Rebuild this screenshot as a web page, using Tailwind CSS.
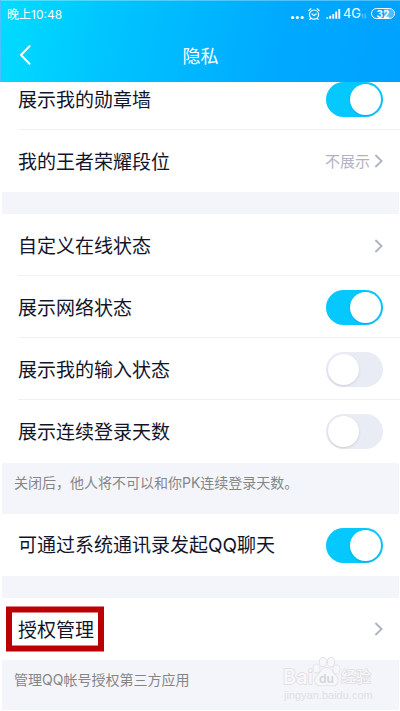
<!DOCTYPE html>
<html lang="zh-CN">
<head>
  <meta charset="UTF-8" />
  <meta name="viewport" content="width=device-width, initial-scale=1.0"/>
  <title>隐私</title>
  <script src="https://cdn.jsdelivr.net/npm/@tailwindcss/browser@4"></script>
</head>
<body class="bg-white font-['Noto_Sans_CJK_SC',sans-serif] text-[#11152b]">

  <!-- Header -->
  <header class="relative z-10 h-[82px] border-t border-l border-white/30 bg-linear-[100deg,#00dcff_0%,#00c4ff_28%,#00a9ff_70%,#00a2ff_100%] text-white">
    <div class="flex h-[26px] items-center justify-between pl-1.5 pr-[5px] text-xs">
      <p>晚上<span class="font-['Inter']">10:48</span></p>
      <div class="flex items-center gap-1 font-['Inter']">
        <svg class="h-3 w-[13px]" viewBox="0 0 13 12" fill="currentColor">
          <circle cx="1.6" cy="9.5" r="1.6"/><circle cx="6.4" cy="9.5" r="1.6"/><circle cx="11.2" cy="9.5" r="1.6"/>
        </svg>
        <svg class="h-3 w-3" viewBox="0 0 12 12" fill="none" stroke="currentColor" stroke-width="1.2" stroke-linecap="round">
          <circle cx="6" cy="6.6" r="4.6"/>
          <path d="M.8 2.6 2.9.8M11.2 2.6 9.1.8M4 6l2 1.6L8.2 6M2.7 10.4l-.8 1M9.3 10.4l.8 1"/>
        </svg>
        <svg class="ml-0.5 h-3 w-[15px]" viewBox="0 0 15 12" fill="currentColor">
          <path d="M.3 9.200h1.900v1.600H.3zM3.300 7.800h1.900v3H3.300zM6.300 5.900h1.900v4.900H6.300zM9.300 3.600h1.900v7.200H9.300zM12.300 1h1.900v9.800h-1.900z"/>
        </svg>
        <span class="-ml-0.5 text-[13px]">4G</span>
        <svg class="-ml-1 mt-1 h-1.5 w-1.5 opacity-50" viewBox="0 0 6 6" fill="none" stroke="currentColor" stroke-width=".8">
          <path d="M1.8 5.5V1L.6 2.3M4.2.6v4.6l1.2-1.4"/>
        </svg>
        <span class="relative flex h-[11px] w-6 items-center justify-center overflow-hidden rounded-full border border-white text-[10px] font-bold leading-none">
          <span class="absolute inset-y-0 right-0 w-2.5 bg-white/30"></span>
          <span class="relative">32</span>
        </span>
      </div>
    </div>
    <div class="flex h-[55px] items-center px-3">
      <button type="button" aria-label="返回" class="flex h-8 w-6 items-center justify-center">
        <svg class="h-5 w-3" viewBox="0 0 12 20" fill="none" stroke="currentColor" stroke-width="2" stroke-linecap="round" stroke-linejoin="round"><path d="M10.5 1.3 2 10l8.5 8.7"/></svg>
      </button>
      <h1 class="flex-1 pr-6 text-center text-lg">隐私</h1>
    </div>
  </header>

  <!-- Settings, first row scrolled partly under the header -->
  <main class="-mt-3.5 text-[19px]">
    <section class="pl-[18px]">
      <label class="flex h-[62px] items-center justify-between border-b border-[#f0f1f6] pr-[17px] pt-0.5">
        展示我的勋章墙
        <input type="checkbox" checked class="relative h-[35px] w-[57px] appearance-none rounded-full bg-[#e9ebf5] before:absolute before:top-0.5 before:left-0.5 before:size-[31px] before:rounded-full before:bg-white before:shadow-sm checked:bg-[#05c8ff] checked:before:left-6">
      </label>
      <button type="button" class="flex h-[62px] w-full items-center justify-between pr-[17px]">
        我的王者荣耀段位
        <span class="flex items-center gap-1 text-[15px] text-[#b0b3c2]">不展示
          <svg class="h-3.5 w-[9px]" viewBox="0 0 9 14" fill="none" stroke="#aeb2c1" stroke-width="1.8"><path d="M1.4 1 7.6 7l-6.2 6"/></svg>
        </span>
      </button>
    </section>

    <div class="ml-0.5 mr-px h-[22px] bg-[#f4f5fa]"></div>

    <section class="pl-[18px]">
      <button type="button" class="flex h-[62px] w-full items-center justify-between border-b border-[#f0f1f6] pr-[17px] pt-0.5">
        自定义在线状态
        <svg class="h-3.5 w-[9px]" viewBox="0 0 9 14" fill="none" stroke="#aeb2c1" stroke-width="1.8"><path d="M1.4 1 7.6 7l-6.2 6"/></svg>
      </button>
      <label class="flex h-[62px] items-center justify-between border-b border-[#f0f1f6] pr-[17px] pt-0.5">
        展示网络状态
        <input type="checkbox" checked class="relative h-[35px] w-[57px] appearance-none rounded-full bg-[#e9ebf5] before:absolute before:top-0.5 before:left-0.5 before:size-[31px] before:rounded-full before:bg-white before:shadow-sm checked:bg-[#05c8ff] checked:before:left-6">
      </label>
      <label class="flex h-[62px] items-center justify-between border-b border-[#f0f1f6] pr-[17px] pt-0.5">
        展示我的输入状态
        <input type="checkbox" class="relative h-[35px] w-[57px] appearance-none rounded-full bg-[#e9ebf5] before:absolute before:top-0.5 before:left-0.5 before:size-[31px] before:rounded-full before:bg-white before:shadow-sm checked:bg-[#05c8ff] checked:before:left-6">
      </label>
      <label class="flex h-[63px] items-center justify-between pr-[17px]">
        展示连续登录天数
        <input type="checkbox" class="relative h-[35px] w-[57px] appearance-none rounded-full bg-[#e9ebf5] before:absolute before:top-0.5 before:left-0.5 before:size-[31px] before:rounded-full before:bg-white before:shadow-sm checked:bg-[#05c8ff] checked:before:left-6">
      </label>
    </section>

    <p class="ml-0.5 mr-px h-[51px] bg-[#f4f5fa] pt-[7px] pl-3 text-sm leading-6 text-[#858585]">关闭后，他人将不可以和你<span class="font-['Inter']">PK</span>连续登录天数。</p>

    <section class="pl-[18px]">
      <label class="flex h-[62px] items-center justify-between pr-[17px]">
        <span>可通过系统通讯录发起<span class="font-['Inter']">QQ</span>聊天</span>
        <input type="checkbox" checked class="relative h-[35px] w-[57px] appearance-none rounded-full bg-[#e9ebf5] before:absolute before:top-0.5 before:left-0.5 before:size-[31px] before:rounded-full before:bg-white before:shadow-sm checked:bg-[#05c8ff] checked:before:left-6">
      </label>
    </section>

    <div class="ml-0.5 mr-px h-[22px] bg-[#f4f5fa]"></div>

    <section class="pl-[18px]">
      <button type="button" class="flex h-[62px] w-full items-center justify-between pr-[17px]">
        <span class="relative">
          授权管理
          <span class="absolute -left-3 -right-2.5 top-1/2 h-[45px] -translate-y-1/2 border-6 border-[#bb0004]"></span>
        </span>
        <svg class="h-3.5 w-[9px]" viewBox="0 0 9 14" fill="none" stroke="#aeb2c1" stroke-width="1.8"><path d="M1.4 1 7.6 7l-6.2 6"/></svg>
      </button>
    </section>

    <div class="relative ml-0.5 mr-px h-[50px] bg-[#f4f5fa] pt-[7px] pl-3 text-sm leading-6 text-[#858585]">
      <p>管理<span class="font-['Inter']">QQ</span>帐号授权第三方应用</p>
      <!-- Watermark -->
      <svg class="absolute right-6 bottom-2 h-12 w-[94px]" viewBox="0 0 94 48" fill="#f7f7f9" stroke="#dcdde0" stroke-width="1.4" paint-order="stroke" stroke-linejoin="round">
        <text x="2" y="30" font-size="20" font-weight="600" font-family="Inter">Bai</text>
        <ellipse cx="35.500" cy="14.500" rx="3.200" ry="4.200"/>
        <ellipse cx="42" cy="8" rx="3.300" ry="4.600"/>
        <ellipse cx="50" cy="8" rx="3.300" ry="4.600"/>
        <ellipse cx="55.500" cy="15.500" rx="3.200" ry="4.200"/>
        <path d="M45.500 14c5 0 6 5 9 7.500 4 3 3 10-3 10-3 0-4-.8-6-.8s-3 .8-6 .8c-6 0-7-7-3-10 3-2.500 4-7.500 9-7.500z"/>
        <text x="38" y="29" font-size="12" font-weight="600" font-family="Inter" fill="#d3d4d8" stroke="none">du</text>
        <text x="60" y="28" font-size="15" font-weight="500" font-family="Noto Sans CJK SC">经验</text>
        <text x="3" y="45" font-size="11" font-family="Liberation Sans" fill="#dedfe3" stroke="none">jingyan.baidu.com</text>
      </svg>
    </div>
  </main>

</body>
</html>
